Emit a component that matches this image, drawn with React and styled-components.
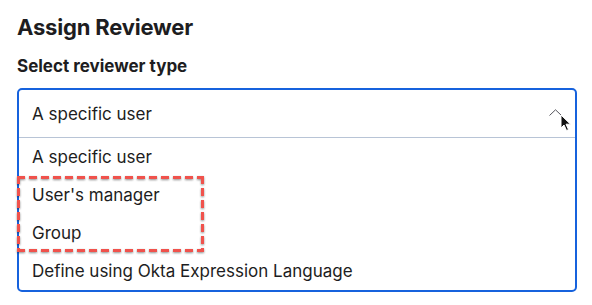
import styled, { createGlobalStyle } from 'styled-components';

const GlobalStyle = createGlobalStyle`
  body {
    margin: 0;
    background: #ffffff;
    font-family: Inter, "Noto Sans", sans-serif;
    color: #1d1d21;
  }
`;

const Page = styled.div`
  width: 592px;
  height: 305px;
  box-sizing: border-box;
  padding: 13px 15px 0 17px;
`;

const Title = styled.h2`
  margin: 0;
  font-size: 22px;
  line-height: 28px;
  font-weight: 700;
  letter-spacing: -0.2px;
`;

const Label = styled.div`
  margin-top: 15px;
  font-size: 17px;
  line-height: 20px;
  font-weight: 700;
`;

const Field = styled.div`
  position: relative;
  margin-top: 12px;
  border: 2px solid #1662dd;
  border-radius: 5px;
`;

const Trigger = styled.div`
  display: flex;
  align-items: center;
  justify-content: space-between;
  height: 47px;
  padding: 0 13px 0 13px;
  font-size: 17px;
  border-bottom: 1px solid #b8c4d6;
`;

const Chevron = styled.svg`
  width: 13px;
  height: 7px;
  margin-bottom: 3px;
`;

const Options = styled.ul`
  position: relative;
  list-style: none;
  margin: 0;
  padding: 0;
`;

const Option = styled.li`
  height: 38px;
  display: flex;
  align-items: center;
  padding-left: 13px;
  font-size: 17px;
`;

const dash = (dir) =>
  `repeating-linear-gradient(${dir}, #f0524c 0 8px, transparent 8px 12px)`;

const Highlight = styled.div`
  position: absolute;
  left: -2px;
  top: 38px;
  width: 187px;
  height: 76px;
  background:
    ${dash('90deg')} left top / 100% 3px no-repeat,
    ${dash('90deg')} left bottom / 100% 3px no-repeat,
    ${dash('180deg')} left top / 3px 100% no-repeat,
    ${dash('180deg')} right top / 3px 100% no-repeat;
  filter: drop-shadow(0 1px 1px rgba(0, 0, 0, 0.45));
  pointer-events: none;
`;

const Cursor = styled.svg`
  position: absolute;
  left: 541px;
  top: 24px;
  width: 12px;
  height: 18px;
`;

const options = [
  'A specific user',
  "User's manager",
  'Group',
  'Define using Okta Expression Language',
];

export default function App() {
  return (
    <>
      <GlobalStyle />
      <Page>
        <Title>Assign Reviewer</Title>
        <Label>Select reviewer type</Label>
        <Field>
          <Trigger>
            <span>A specific user</span>
            <Chevron viewBox="0 0 13 7">
              <path d="M0.5 6.5 L6.5 0.8 L12.5 6.5" fill="none" stroke="#55555c" strokeWidth="1" />
            </Chevron>
          </Trigger>
          <Options>
            {options.map(o => (
              <Option key={o}>{o}</Option>
            ))}
            <Highlight />
          </Options>
          <Cursor viewBox="0 0 12 18">
            <path
              d="M1 1 L1 14 L4 11 L6.5 16.5 L8.5 15.6 L6 10.2 L10.5 10.2 Z"
              fill="#111"
              stroke="#fff"
              strokeWidth="1"
            />
          </Cursor>
        </Field>
      </Page>
    </>
  );
}
